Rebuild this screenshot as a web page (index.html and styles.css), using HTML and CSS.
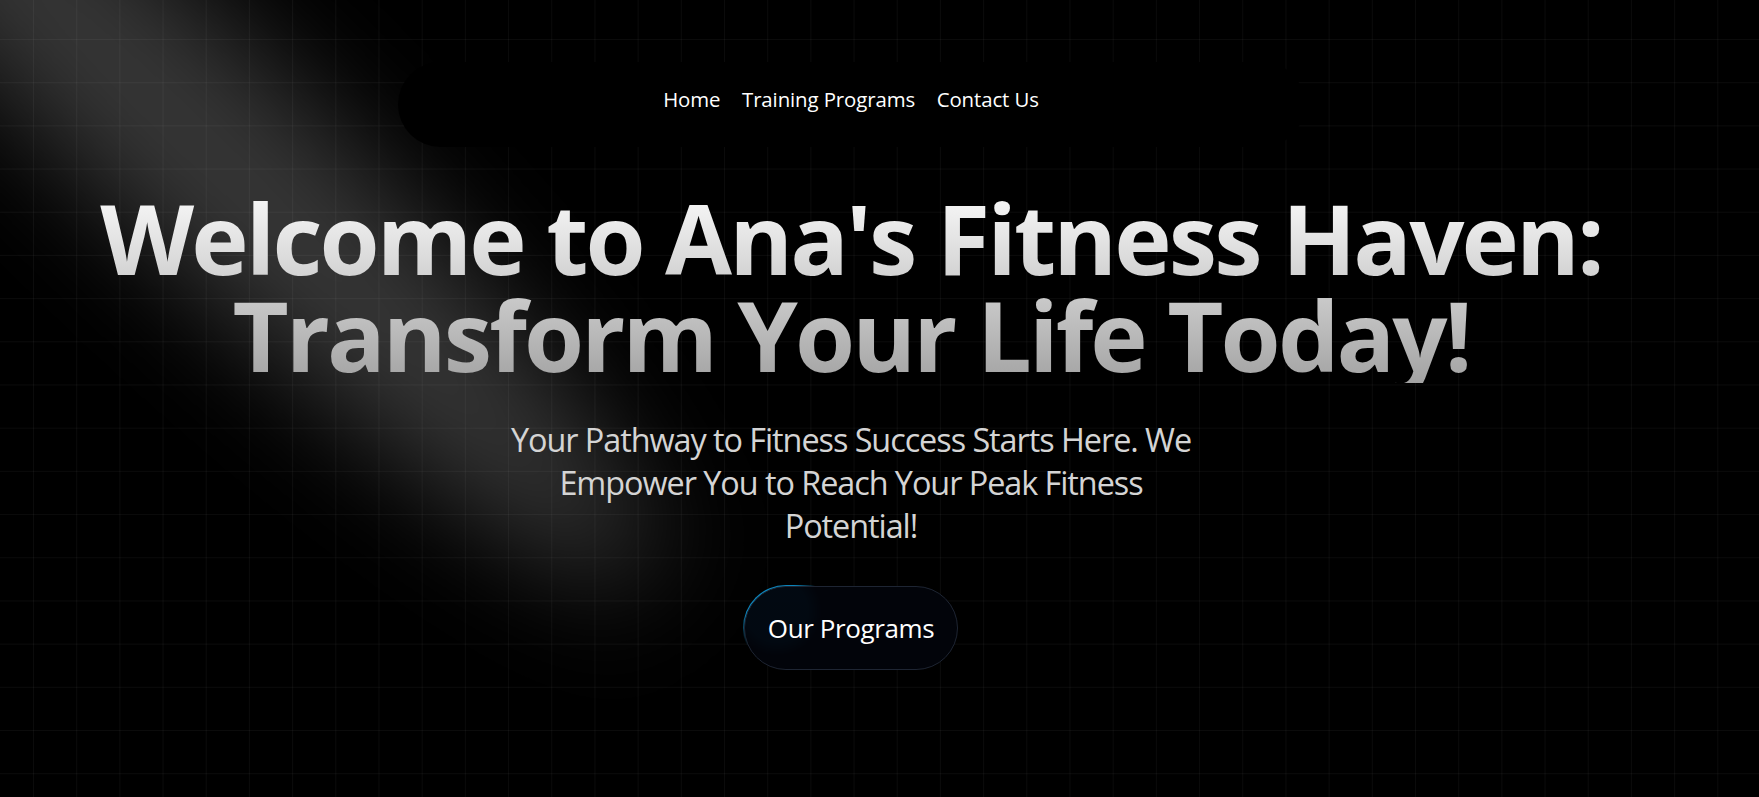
FILE: index.html
```html
<!DOCTYPE html>
<html lang="en">
<head>
<meta charset="utf-8">
<title>Ana's Fitness Haven</title>
<link rel="stylesheet" href="styles.css">
</head>
<body>
<div class="page">
  <div class="spotlight"></div>
  <header class="nav-wrap">
    <nav class="nav">
      <a class="nav-link" href="#">Home</a>
      <a class="nav-link" href="#">Training Programs</a>
      <a class="nav-link" href="#">Contact Us</a>
    </nav>
  </header>
  <main class="hero">
    <h1 class="title">Welcome to Ana's Fitness Haven: Transform Your Life Today!</h1>
    <p class="subtitle">Your Pathway to Fitness Success Starts Here. We Empower You to Reach Your Peak Fitness Potential!</p>
    <a class="btn" href="#">
      <span class="btn-glow"></span>
      <span class="btn-inner">Our Programs</span>
    </a>
  </main>
</div>
</body>
</html>
```

FILE: styles.css
```css
* { box-sizing: border-box; }

html, body {
  margin: 0;
  padding: 0;
  background: #000;
}

body {
  font-family: "Open Sans", "Noto Sans", sans-serif;
  color: #fff;
}

.page {
  position: relative;
  height: 797px;
  overflow: hidden;
  background-color: #000;
  background-image:
    linear-gradient(to right, rgba(255,255,255,0.045) 1px, transparent 1px),
    linear-gradient(to bottom, rgba(255,255,255,0.045) 1px, transparent 1px);
  background-size: 43.2px 43.2px;
  background-position: 33px 39px;
  padding-right: 57px;
}

.spotlight {
  position: absolute;
  left: -450px;
  top: 30px;
  width: 1280px;
  height: 210px;
  border-radius: 50%;
  background: rgba(255,255,255,0.21);
  filter: blur(57px);
  transform: rotate(44deg);
  pointer-events: none;
  z-index: 0;
}

.nav-wrap {
  position: relative;
  z-index: 2;
  display: flex;
  justify-content: center;
  padding-top: 62px;
}

.nav {
  width: 907px;
  height: 85px;
  background: #000;
  border-radius: 43px;
  display: flex;
  align-items: center;
  justify-content: center;
  gap: 21.6px;
  padding-bottom: 12px;
}

.nav-link {
  color: #fff;
  text-decoration: none;
  font-size: 20.4px;
  letter-spacing: -0.1px;
  line-height: 32px;
}

.hero {
  position: relative;
  z-index: 1;
  display: flex;
  flex-direction: column;
  align-items: center;
  text-align: center;
}

.title {
  margin: 41.7px 0 0;
  max-width: 1600px;
  font-size: 97.2px;
  line-height: 97.2px;
  font-weight: 700;
  letter-spacing: -2.9px;
  background: linear-gradient(to bottom, #fafafa, #a3a3a3);
  -webkit-background-clip: text;
  background-clip: text;
  color: transparent;
}

.subtitle {
  margin: 34.7px 0 0;
  max-width: 700px;
  font-size: 32.4px;
  line-height: 43.2px;
  letter-spacing: -1.05px;
  color: #d4d4d4;
}

.btn {
  position: relative;
  margin-top: 37.6px;
  width: 216px;
  height: 86.4px;
  padding: 1px;
  border-radius: 43px;
  overflow: hidden;
  text-decoration: none;
  display: block;
}

.btn-glow {
  position: absolute;
  left: -20px;
  top: -28px;
  width: 108px;
  height: 108px;
  opacity: 0.8;
  background: radial-gradient(#0ea5e9 40%, transparent 60%);
}

.btn-inner {
  position: relative;
  display: flex;
  align-items: center;
  justify-content: center;
  width: 100%;
  height: 100%;
  border-radius: 42px;
  border: 1px solid #1e2533;
  background: rgba(2,4,10,0.96);
  color: #fff;
  font-size: 26px;
  letter-spacing: -0.4px;
}
```
